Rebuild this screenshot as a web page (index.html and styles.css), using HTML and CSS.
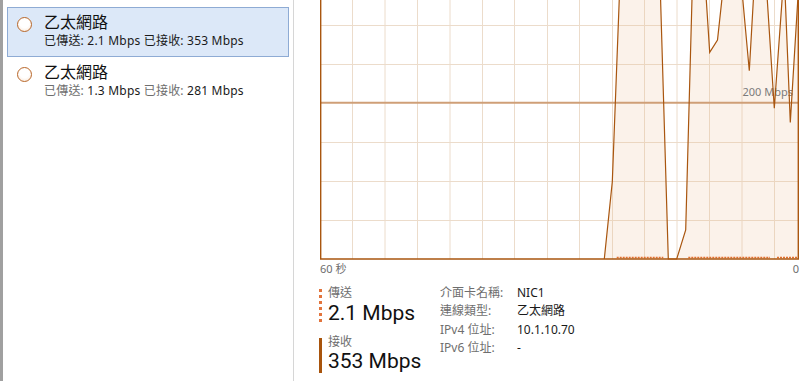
FILE: index.html
```html
<!DOCTYPE html>
<html lang="zh-Hant">
<head>
  <meta charset="UTF-8" />
  <meta name="viewport" content="width=device-width, initial-scale=1.0"/>
  <title>效能 - 乙太網路</title>
  <link rel="stylesheet" href="styles.css">
</head>
<body>
  <div class="app">
    <!-- Adapter list -->
    <aside class="sidebar">
      <div class="adapter selected">
        <span class="dot"></span>
        <div class="adapter-text">
          <div class="adapter-name">乙太網路</div>
          <div class="adapter-rate"><span class="muted">已傳送:</span> 2.1 Mbps <span class="muted">已接收:</span> 353 Mbps</div>
        </div>
      </div>
      <div class="adapter">
        <span class="dot"></span>
        <div class="adapter-text">
          <div class="adapter-name">乙太網路</div>
          <div class="adapter-rate"><span class="muted">已傳送:</span> 1.3 Mbps <span class="muted">已接收:</span> 281 Mbps</div>
        </div>
      </div>
    </aside>

    <!-- Throughput detail -->
    <main class="detail">
      <div class="chart">
        <svg class="graph" width="479" height="260" viewBox="0 0 479 260">
          <g class="grid">
            <line x1="32.5" y1="0" x2="32.5" y2="259"/>
            <line x1="65" y1="0" x2="65" y2="259"/>
            <line x1="97.5" y1="0" x2="97.5" y2="259"/>
            <line x1="130" y1="0" x2="130" y2="259"/>
            <line x1="162.5" y1="0" x2="162.5" y2="259"/>
            <line x1="194.5" y1="0" x2="194.5" y2="259"/>
            <line x1="227.5" y1="0" x2="227.5" y2="259"/>
            <line x1="259.5" y1="0" x2="259.5" y2="259"/>
            <line x1="292.5" y1="0" x2="292.5" y2="259"/>
            <line x1="324.5" y1="0" x2="324.5" y2="259"/>
            <line x1="357" y1="0" x2="357" y2="259"/>
            <line x1="389.5" y1="0" x2="389.5" y2="259"/>
            <line x1="422" y1="0" x2="422" y2="259"/>
            <line x1="454.5" y1="0" x2="454.5" y2="259"/>
            <line x1="0" y1="25.5" x2="479" y2="25.5"/>
            <line x1="0" y1="64.5" x2="479" y2="64.5"/>
            <line x1="0" y1="142.5" x2="479" y2="142.5"/>
            <line x1="0" y1="181.5" x2="479" y2="181.5"/>
            <line x1="0" y1="220.5" x2="479" y2="220.5"/>
          </g>
          <polygon class="area" points="284.3,259 292.3,181.7 300,-20 340,-20 348.3,259 356.7,259 365.7,230 372.5,-20 385,-20 389.7,52.3 397.5,40 404,-20 421,-20 429.3,70.7 434.5,-20 446,-20 454.3,108.3 463.5,-20 464.5,-20 470.3,122.5 479,-20 479,259"/>
          <line class="scale" x1="0" y1="102.7" x2="479" y2="102.7"/>
          <text class="scale-label" x="473" y="96" text-anchor="end">200 Mbps</text>
          <polyline class="send" points="296.7,257.5 343.3,257.5"/>
          <polyline class="send" points="368.3,257.5 450,257.5"/>
          <polyline class="send" points="457,257.5 477,257.5"/>
          <polyline class="recv" points="284.3,259 292.3,181.7 300,-20 340,-20 348.3,259 356.7,259 365.7,230 372.5,-20 385,-20 389.7,52.3 397.5,40 404,-20 421,-20 429.3,70.7 434.5,-20 446,-20 454.3,108.3 463.5,-20 464.5,-20 470.3,122.5 479,-20"/>
          <path class="frame" d="M0.6 0 V259 H478.4 V0"/>
        </svg>
      </div>
      <div class="axis">
        <span>60 秒</span>
        <span>0</span>
      </div>

      <div class="stats">
        <div class="rates">
          <div class="rate send-rate">
            <div class="rate-label">傳送</div>
            <div class="rate-value">2.1 Mbps</div>
          </div>
          <div class="rate recv-rate">
            <div class="rate-label">接收</div>
            <div class="rate-value">353 Mbps</div>
          </div>
        </div>
        <dl class="props">
          <dt>介面卡名稱:</dt><dd>NIC1</dd>
          <dt>連線類型:</dt><dd>乙太網路</dd>
          <dt>IPv4 位址:</dt><dd>10.1.10.70</dd>
          <dt>IPv6 位址:</dt><dd>-</dd>
        </dl>
      </div>
    </main>
  </div>
</body>
</html>
```

FILE: styles.css
```css
html, body {
  margin: 0;
  padding: 0;
  background: #fff;
}

body {
  font-family: "Noto Sans", "Noto Sans CJK TC", sans-serif;
  color: #1a1a1a;
  overflow: hidden;
}

.app {
  display: flex;
  height: 381px;
}

/* ---- left list ---- */
.sidebar {
  box-sizing: border-box;
  width: 294px;
  flex: none;
  border-left: 3px solid #a0a0a0;
  border-right: 1px solid #d6d6d6;
  padding: 7px 4px 0 4px;
}

.adapter {
  box-sizing: border-box;
  height: 50px;
  display: flex;
  align-items: flex-start;
  gap: 12px;
  padding: 4px 0 0 9px;
  border: 1px solid transparent;
}

.adapter.selected {
  background: #dce8f8;
  border-color: #8eabd4;
}

.dot {
  box-sizing: border-box;
  width: 15px;
  height: 15px;
  margin-top: 5px;
  border-radius: 50%;
  border: 1px solid #b8672a;
  background: radial-gradient(circle at 50% 40%, #fff 0, #fff 45%, #f8e2cf 100%);
}

.adapter-name {
  font-size: 16px;
  line-height: 20px;
  height: 20px;
  color: #111;
}

.adapter-rate {
  font-size: 12px;
  line-height: 15px;
  height: 15px;
  margin-top: 1px;
  letter-spacing: 0.2px;
  color: #1a1a1a;
}

.adapter:not(.selected) .muted {
  color: #6e6e6e;
}

/* ---- right detail ---- */
.detail {
  flex: 1;
  padding: 0 6px 0 26px;
  display: flex;
  flex-direction: column;
}

.chart {
  height: 260px;
}

.graph {
  display: block;
  overflow: hidden;
}

.grid line {
  stroke: #ecdccb;
  stroke-width: 1;
}

.area {
  fill: rgba(236, 190, 150, 0.2);
  stroke: none;
}

.scale {
  stroke: #cf9f77;
  stroke-width: 2;
}

.scale-label {
  font-family: "Noto Sans", sans-serif;
  font-size: 11px;
  fill: #7b7b7b;
}

.recv {
  fill: none;
  stroke: #a9560f;
  stroke-width: 1.2;
}

.send {
  fill: none;
  stroke: #e2702f;
  stroke-width: 1.5;
  stroke-dasharray: 2 1;
}

.frame {
  fill: none;
  stroke: #a9560f;
  stroke-width: 1.6;
}

.axis {
  display: flex;
  justify-content: space-between;
  font-size: 11px;
  line-height: 14px;
  height: 14px;
  margin-top: 2px;
  color: #6d6d6d;
}

.stats {
  display: flex;
  margin-top: 8px;
  margin-left: -1px;
}

.rates {
  width: 121px;
  display: flex;
  flex-direction: column;
  gap: 12px;
  padding-top: 2px;
}

.rate {
  padding-left: 9px;
  background-repeat: no-repeat;
  background-position: 0 3px;
  background-size: 3px calc(100% - 3px);
}

.send-rate {
  background-image: repeating-linear-gradient(to bottom, #e2743c 0 3px, transparent 3px 6px);
}

.recv-rate {
  padding-bottom: 2px;
  background-image: linear-gradient(#a8540c, #a8540c);
}

.rate-label {
  font-family: "Liberation Sans", "Noto Sans CJK TC", sans-serif;
  font-size: 12px;
  line-height: 14px;
  height: 14px;
  color: #6e6e6e;
}

.rate-value {
  font-family: Roboto, "Noto Sans", sans-serif;
  font-size: 21px;
  line-height: 20px;
  height: 20px;
  margin-top: 2.5px;
  color: #111;
}

.props {
  margin: 0;
  display: grid;
  grid-template-columns: 77px auto;
  grid-auto-rows: 18.3px;
  font-size: 12px;
  line-height: 18.3px;
}

.props dt {
  color: #6e6e6e;
}

.props dd {
  margin: 0;
  color: #1a1a1a;
}
```
